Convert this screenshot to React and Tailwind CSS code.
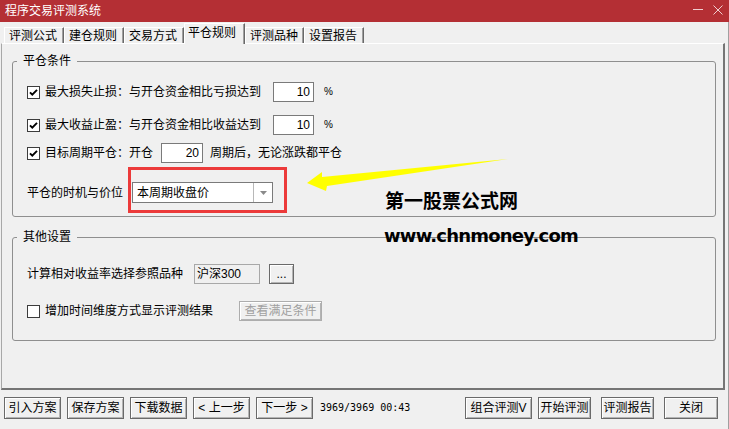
import React from "react";

function Check({ checked }) {
  return (
    <div className="w-[13px] h-[13px] shrink-0 bg-white border border-[#3c3c3c] flex items-center justify-center">
      {checked && (
        <svg width="9" height="9" viewBox="0 0 9 9">
          <polyline points="1,4.3 3.3,6.7 8,1.8" fill="none" stroke="#000" strokeWidth="1.9" />
        </svg>
      )}
    </div>
  );
}

function Edit({ children, className }) {
  return (
    <div className={"h-[20px] bg-white border border-[#7a7a7a] flex items-center justify-end pr-[3px] leading-none " + className}>
      {children}
    </div>
  );
}

function Btn({ children, className, disabled }) {
  return (
    <div
      className={
        "h-[22px] shrink-0 flex items-center justify-center border bg-[#f0f0f0] leading-none shadow-[inset_1px_1px_0_#ffffff,inset_-1px_-1px_0_#b4b4b4] " +
        (disabled ? "border-[#adadad] text-[#a0a0a0] " : "border-[#6a6a6a] text-black ") +
        className
      }
    >
      {children}
    </div>
  );
}

function Tab({ children, selected, className }) {
  if (selected) {
    return (
      <div className={"relative z-10 -mb-px h-[21px] bg-[#f0f0f0] border-t border-l border-t-white border-l-white border-r border-r-[#696969] shadow-[inset_-1px_0_0_#a0a0a0] pl-[3px] pb-[3px] flex items-center leading-[16px] " + className}>
        {children}
      </div>
    );
  }
  return (
    <div className={"h-[16px] border-t border-l border-t-white border-l-white border-r border-r-[#696969] shadow-[inset_-1px_0_0_#a0a0a0] pl-[4px] flex items-center leading-[16px] " + className}>
      {children}
    </div>
  );
}

export default function App() {
  return (
    <div className="relative w-[729px] h-[429px] bg-[#f0f0f0] overflow-hidden flex flex-col text-[12px] text-black font-['Liberation_Sans','Noto_Sans_CJK_SC',sans-serif]">
      {/* title bar */}
      <div className="h-[22px] shrink-0 bg-[#b42f34] flex items-center justify-between pl-[5px] pr-[6px]">
        <span className="text-white leading-none">程序交易评测系统</span>
        <div className="self-start pt-[5px] flex items-start gap-[9px]">
          <svg width="11" height="10" viewBox="0 0 11 10">
            <line x1="0" y1="4.5" x2="10" y2="4.5" stroke="#f0cfd0" strokeWidth="1" />
          </svg>
          <svg width="10" height="10" viewBox="0 0 10 10">
            <line x1="0.5" y1="0.5" x2="9.5" y2="9.5" stroke="#f0cfd0" strokeWidth="1" />
            <line x1="9.5" y1="0.5" x2="0.5" y2="9.5" stroke="#f0cfd0" strokeWidth="1" />
          </svg>
        </div>
      </div>

      <div className="flex-1 flex flex-col border-r border-r-[#a0a0a0]">
        {/* tabs */}
        <div className="h-[21px] shrink-0 flex items-end pl-[4px]">
          <Tab className="w-[60px]">评测公式</Tab>
          <Tab className="w-[60px]">建仓规则</Tab>
          <Tab className="w-[60px]">交易方式</Tab>
          <Tab selected className="w-[61px]">平仓规则</Tab>
          <Tab className="w-[59px]">评测品种</Tab>
          <Tab className="w-[60px]">设置报告</Tab>
        </div>

        {/* panel */}
        <div className="h-[347px] shrink-0 ml-[1px] mr-[3px] border-t border-t-white border-l border-l-[#a8a8a8] border-r-2 border-r-[#757575] border-b-2 border-b-[#757575] flex flex-col">
          {/* group 1 */}
          <fieldset className="mt-[9px] ml-[10px] mr-[7px] border border-[#8f8f8f] rounded-[3px]">
            <legend className="ml-[4px] px-[6px] leading-[16px]">平仓条件</legend>
            <div className="flex flex-col pl-[14px] pb-[13px]">
              <div className="mt-[13px] h-[20px] flex items-center">
                <Check checked />
                <span className="ml-[5px] w-[216px] leading-none">最大损失止损：与开仓资金相比亏损达到</span>
                <Edit className="ml-[12px] w-[41px]">10</Edit>
                <span className="ml-[10px] text-[10px] leading-none">%</span>
              </div>
              <div className="mt-[13px] h-[20px] flex items-center">
                <Check checked />
                <span className="ml-[5px] w-[216px] leading-none">最大收益止盈：与开仓资金相比收益达到</span>
                <Edit className="ml-[12px] w-[41px]">10</Edit>
                <span className="ml-[10px] text-[10px] leading-none">%</span>
              </div>
              <div className="mt-[8px] h-[20px] flex items-center">
                <Check checked />
                <span className="ml-[5px] w-[108px] leading-none">目标周期平仓：开仓</span>
                <Edit className="ml-[8px] w-[42px]">20</Edit>
                <span className="ml-[7px] leading-none">周期后，无论涨跌都平仓</span>
              </div>
              <div className="mt-[19px] h-[21px] flex items-center">
                <span className="w-[96px] leading-none">平仓的时机与价位</span>
                <div className="relative ml-[9px] w-[141px] h-[21px] bg-white border border-[#7a7a7a] flex items-stretch">
                  <div className="flex-1 flex items-center pl-[4px] leading-none">本周期收盘价</div>
                  <div className="w-[19px] border-l border-l-[#b8b8b8] flex items-center justify-center">
                    <svg width="7" height="4" viewBox="0 0 7 4">
                      <polygon points="0,0 7,0 3.5,4" fill="#8a8a8a" />
                    </svg>
                  </div>
                  <div className="absolute left-[-5px] top-[-16px] w-[159px] h-[46px] border-[3px] border-[#ec3a3a]"></div>
                </div>
              </div>
            </div>
          </fieldset>

          {/* group 2 */}
          <fieldset className="mt-[12px] ml-[10px] mr-[7px] border border-[#8f8f8f] rounded-[3px]">
            <legend className="ml-[4px] px-[6px] leading-[16px]">其他设置</legend>
            <div className="flex flex-col pl-[14px] pb-[19px]">
              <div className="mt-[19px] h-[20px] flex items-center">
                <span className="w-[156px] leading-none">计算相对收益率选择参照品种</span>
                <div className="ml-[11px] w-[66px] h-[20px] bg-[#f0f0f0] border border-[#a8a8a8] flex items-center pl-[2px] leading-none">沪深300</div>
                <Btn className="ml-[9px] w-[25px] !h-[20px]">...</Btn>
              </div>
              <div className="mt-[17px] h-[20px] flex items-center">
                <Check />
                <span className="ml-[5px] w-[168px] leading-none">增加时间维度方式显示评测结果</span>
                <Btn disabled className="ml-[26px] w-[83px] !h-[20px]">查看满足条件</Btn>
              </div>
            </div>
          </fieldset>
        </div>

        {/* bottom bar */}
        <div className="flex-1 flex items-start pt-[7px] pl-[4px] pr-[10px]">
          <Btn className="w-[57px]">引入方案</Btn>
          <Btn className="ml-[6px] w-[57px]">保存方案</Btn>
          <Btn className="ml-[6px] w-[57px]">下载数据</Btn>
          <Btn className="ml-[6px] w-[57px]">&lt; 上一步</Btn>
          <Btn className="ml-[6px] w-[57px]">下一步 &gt;</Btn>
          <span className="ml-[7px] h-[22px] flex items-center text-[10px] leading-none font-['DejaVu_Sans_Mono',monospace]">3969/3969 00:43</span>
          <Btn className="ml-auto w-[67px]">组合评测V</Btn>
          <Btn className="ml-[6px] w-[53px]">开始评测</Btn>
          <Btn className="ml-[10px] w-[53px]">评测报告</Btn>
          <Btn className="ml-[10px] w-[54px]">关闭</Btn>
        </div>
      </div>

      {/* annotation overlays */}
      <svg className="absolute left-0 top-0 pointer-events-none" width="729" height="429" viewBox="0 0 729 429">
        <polygon points="307,183 322,172 322,177 508,159 327,186 326,191" fill="#ffff00" />
      </svg>
      <div className="absolute left-[385px] top-[190px] text-[19px] leading-[19px] font-bold text-black font-['Noto_Sans_CJK_SC',sans-serif]">第一股票公式网</div>
      <div className="absolute left-[384px] top-[227px] text-[18px] leading-[18px] font-bold tracking-[-0.8px] text-black font-['DejaVu_Sans',sans-serif]">www.chnmoney.com</div>
    </div>
  );
}
